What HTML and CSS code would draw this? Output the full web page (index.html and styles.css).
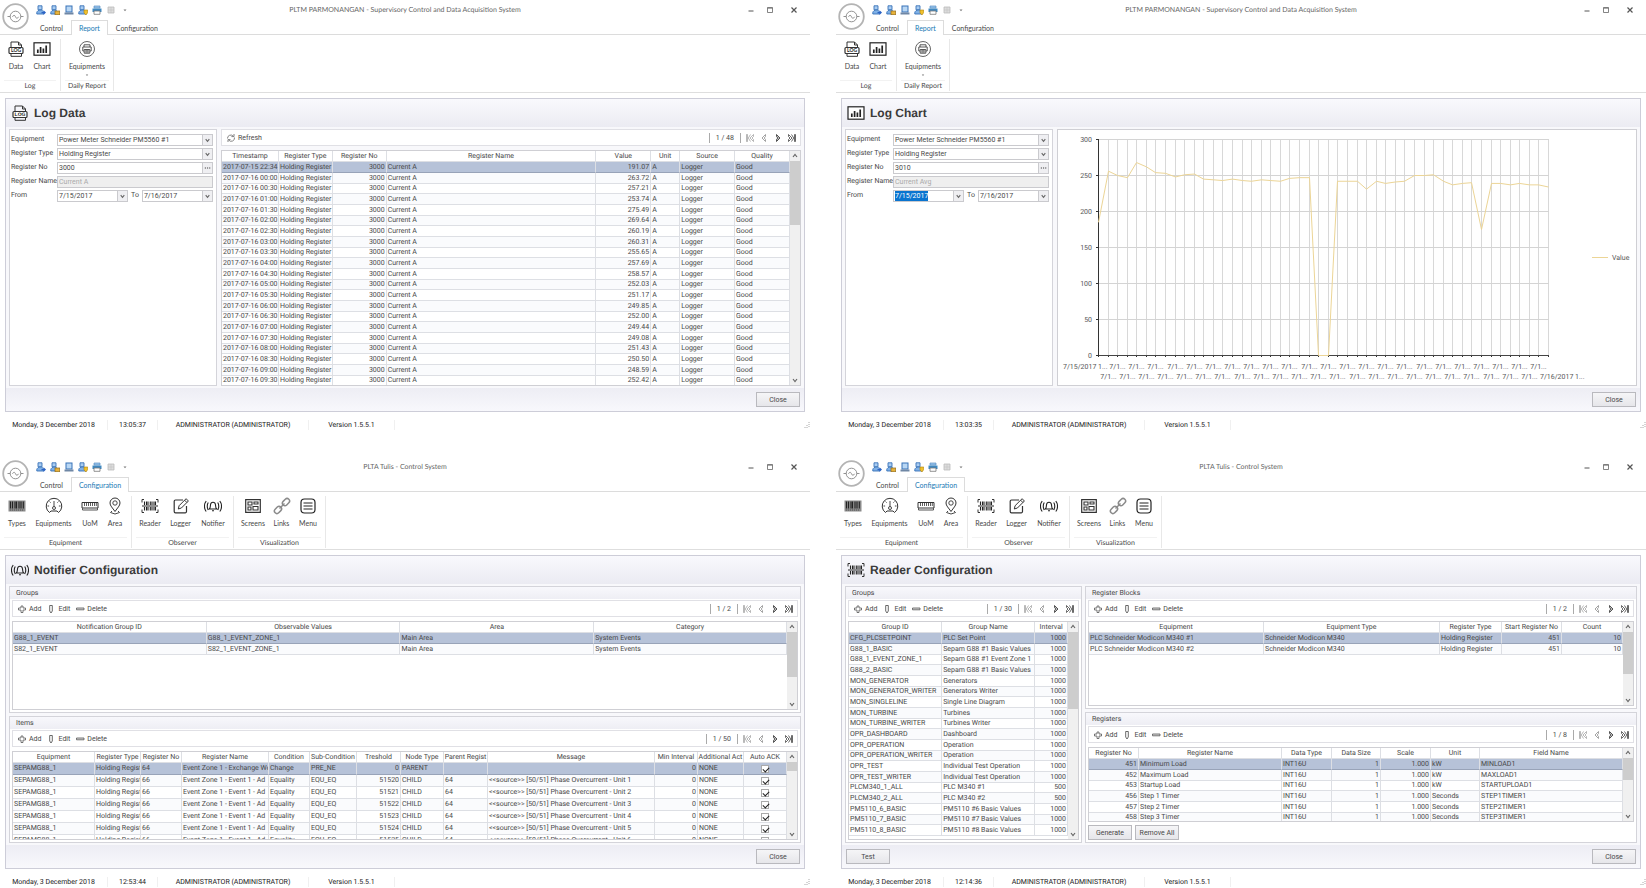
FILE: index.html
```html
<!DOCTYPE html>
<html lang="en">
<head>
<meta charset="utf-8">
<title>Supervisory Control and Data Acquisition System</title>
<link rel="stylesheet" href="styles.css">
</head>
<body>
<svg class="sprite" aria-hidden="true">
  <symbol id="i-logo" viewBox="0 0 27 27">
    <circle cx="13.500" cy="13.500" r="12.300" fill="#fff" stroke="#b4b4b4" stroke-width="1.800"/>
    <circle cx="13.500" cy="13.500" r="5.300" fill="none" stroke="#777" stroke-width=".8"/>
    <path d="M5.500 13.500h2.700M18.800 13.500h2.700M10.500 13.800c1-2 2.200-2 3 0s2 2 3 0" fill="none" stroke="#777" stroke-width=".8"/>
  </symbol>
  <symbol id="i-log" viewBox="0 0 18 18">
    <path d="M4 8V2h7.500L14.500 5v3M11.500 2v3h3M4 13v3.300h10.500V13" fill="none" stroke="#333" stroke-width="1"/>
    <rect x="2" y="7.500" width="14" height="6" rx="1" fill="#fff" stroke="#333" stroke-width="1.200"/>
    <text x="9" y="12.300" font-size="5" font-weight="700" text-anchor="middle" fill="#222">LOG</text>
  </symbol>
  <symbol id="i-chart" viewBox="0 0 18 18">
    <rect x="1" y="2.800" width="16" height="12.400" fill="#fff" stroke="#222" stroke-width="1.200"/>
    <path d="M4.800 13V9.500M7.600 13V7M10.400 13V8.500M13.200 13V5.500" stroke="#222" stroke-width="1.700"/>
  </symbol>
  <symbol id="i-printer" viewBox="0 0 18 18">
    <circle cx="9" cy="9" r="7.500" fill="none" stroke="#555" stroke-width=".9"/>
    <path d="M6 7V4.800h6V7M6 11H4.800V7h8.400v4H12M6.200 9.500h5.600v3.700H6.200zM7.200 10.800h3.600M7.200 12h3.600" fill="none" stroke="#444" stroke-width=".9"/>
  </symbol>
  <symbol id="i-barcode" viewBox="0 0 18 18">
    <rect x=".5" y="3.500" width="17" height="11" fill="#8a8a8a"/>
    <path d="M2.500 4.500v7M4.500 4.500v7M7 4.500v7M8.500 4.500v7M11 4.500v7M13 4.500v7M15.300 4.500v7" stroke="#222" stroke-width="1.100"/>
    <path d="M2 13h14" stroke="#555" stroke-width="1" stroke-dasharray="1 1"/>
  </symbol>
  <symbol id="i-gauge" viewBox="0 0 18 18">
    <path d="M4.500 15.500A7.800 7.800 0 1 1 13.500 15.500M4.500 15.500l1.500-1.500h6l1.500 1.500" fill="none" stroke="#333" stroke-width="1"/>
    <path d="M9 4v5.500M2.500 9h1.600M13.900 9h1.600M4.600 4.600l1 1M13.400 4.600l-1 1" stroke="#333" stroke-width=".9"/>
    <circle cx="9" cy="11" r="1.500" fill="none" stroke="#333" stroke-width=".9"/>
  </symbol>
  <symbol id="i-ruler" viewBox="0 0 18 18">
    <path d="M1 5.500h16v5.500H1z" fill="none" stroke="#333" stroke-width="1"/>
    <path d="M3.500 6v3M5.500 6v3M7.500 6v3M9.500 6v3M11.500 6v3M13.500 6v3M15.300 6v3" stroke="#333" stroke-width=".8"/>
    <path d="M1.500 11v2h15v-2" fill="none" stroke="#555" stroke-width="1"/>
  </symbol>
  <symbol id="i-pin" viewBox="0 0 18 18">
    <path d="M9 14.500C6.500 10.800 4 8.700 4 6a5 5 0 0 1 10 0c0 2.700-2.500 4.800-5 8.500z" fill="none" stroke="#333" stroke-width="1"/>
    <circle cx="9" cy="6" r="2.200" fill="none" stroke="#333" stroke-width=".9"/>
    <path d="M6 14l-1.500 1.500L9 17l4.500-1.500L12 14" fill="none" stroke="#333" stroke-width=".9"/>
  </symbol>
  <symbol id="i-reader" viewBox="0 0 18 18">
    <path d="M3 2.500H1v3M15 2.500h2v3M3 15.500H1v-3M15 15.500h2v-3" fill="none" stroke="#333" stroke-width="1"/>
    <path d="M3.500 4.500V8M5.500 4.500V8M7 4.500V8M9.300 4.500V8M11 4.500V8M13 4.500V8M14.500 4.500V8M3.500 10v3.500M5.500 10v3.500M7 10v3.500M9.300 10v3.500M11 10v3.500M13 10v3.500M14.500 10v3.500" stroke="#222" stroke-width="1.100"/>
    <path d="M1 9h16" stroke="#222" stroke-width="1"/>
  </symbol>
  <symbol id="i-logger" viewBox="0 0 18 18">
    <path d="M11 3H3.500a1.300 1.300 0 0 0-1.300 1.300v10.200a1.300 1.300 0 0 0 1.300 1.300h9.700a1.300 1.300 0 0 0 1.300-1.300V9" fill="none" stroke="#333" stroke-width="1.200"/>
    <path d="M6.300 12l.8-3.300 7-7 2.300 2.300-7 7zM12.600 3.200l2.300 2.300" fill="none" stroke="#333" stroke-width="1"/>
  </symbol>
  <symbol id="i-notifier" viewBox="0 0 18 18">
    <path d="M5.300 12h7.400c-1.300-1.200-1-2.700-1.200-4.300C11.300 6 10.300 5.200 9 5.200S6.700 6 6.500 7.700C6.300 9.300 6.600 10.800 5.300 12zM8 13.700h2" fill="none" stroke="#222" stroke-width="1.100"/>
    <path d="M4.300 5.500c-1.400 2-1.400 5.500 0 7.500M2.200 4C-.1 7-.1 11.500 2.200 14.500M13.700 5.500c1.400 2 1.400 5.500 0 7.500M15.800 4c2.300 3 2.300 7.500 0 10.500" fill="none" stroke="#222" stroke-width="1.100"/>
  </symbol>
  <symbol id="i-screens" viewBox="0 0 18 18">
    <path d="M1.700 2.700h14.600v12.600H1.700z" fill="none" stroke="#333" stroke-width="1.200"/>
    <path d="M4 5h4v3H4zM10 5h4v2h-4zM4 10h3v3H4zM9 9.500h5V13H9z" fill="none" stroke="#333" stroke-width="1.100"/>
  </symbol>
  <symbol id="i-links" viewBox="0 0 18 18">
    <g fill="none" stroke="#8a8a8a" stroke-width="1.500">
      <rect x="9" y="2.600" width="8" height="5" rx="2.500" transform="rotate(-45 13 5.100)"/>
      <rect x="1" y="10.400" width="8" height="5" rx="2.500" transform="rotate(-45 5 12.900)"/>
      <path d="M6.500 11.500l5-5"/>
    </g>
  </symbol>
  <symbol id="i-menu" viewBox="0 0 18 18">
    <rect x="2" y="2" width="14" height="14" rx="3.500" fill="none" stroke="#222" stroke-width="1.200"/>
    <path d="M4.500 6h9M4.500 9h9M4.500 12h9" stroke="#222" stroke-width="1.200"/>
  </symbol>
  <symbol id="i-user" viewBox="0 0 10 10">
    <path d="M2 .8h4v4H2z" fill="#a9cdf2" stroke="#3873b8" stroke-width=".9"/>
    <path d="M.8 9V7.500C1.200 6 2.500 5 4.200 5S7.500 6 7.800 7.500V9z" fill="#7fb0e6" stroke="#3873b8" stroke-width=".9"/>
  </symbol>
  <symbol id="i-user-go" viewBox="0 0 10 10"><use href="#i-user"/><path d="M5.500 7h2V5.200L10 7.600 7.500 10V8.300h-2z" fill="#2b62c4"/></symbol>
  <symbol id="i-user-lock" viewBox="0 0 10 10"><use href="#i-user"/><rect x="5" y="6" width="4.800" height="3.800" fill="#e8b23a" stroke="#8f6a1d" stroke-width=".7"/></symbol>
  <symbol id="i-user-card" viewBox="0 0 10 10"><rect x="2" y="1" width="6" height="6" fill="#b9d7f4" stroke="#3873b8"/><path d="M.5 7.500h9v2h-9z" fill="#6f87a5"/></symbol>
  <symbol id="i-user-key" viewBox="0 0 10 10"><use href="#i-user"/><path d="M6 5h3.800v2.500L8 10 6 8z" fill="#f0c02c" stroke="#a77f16" stroke-width=".6"/></symbol>
  <symbol id="i-print" viewBox="0 0 10 10"><path d="M2 1h6v2H2z" fill="#9cc8f0" stroke="#5a8cc0" stroke-width=".7"/><path d="M.5 3.500h9v3.500h-9z" fill="#3f88c0"/><path d="M2 6h6v3.300H2z" fill="#fff" stroke="#777" stroke-width=".8"/></symbol>
  <symbol id="i-grey" viewBox="0 0 10 10"><path d="M2 2h6v6H2z" fill="#ddd" stroke="#bbb" stroke-width=".8"/><path d="M2 5h6M5 2v6" stroke="#c4c4c4" stroke-width=".6"/></symbol>
  <symbol id="i-refresh" viewBox="0 0 10 10"><path d="M1.500 5.500a3.300 3.300 0 0 1 5.800-2.300M8.500 4.500a3.300 3.300 0 0 1-5.800 2.600M8 1v2.600H5.400M2 9V6.600h2.500" fill="none" stroke="#777" stroke-width=".9"/></symbol>
  <symbol id="i-add" viewBox="0 0 10 10"><path d="M4 2h2v2h2.500v2H6v2.500H4V6H1.500V4H4z" fill="#fff" stroke="#555" stroke-width=".8"/></symbol>
  <symbol id="i-edit" viewBox="0 0 10 10"><path d="M3.700 1.500h2.600V7L5 9 3.700 7z" fill="#fff" stroke="#444" stroke-width=".8"/></symbol>
  <symbol id="i-delete" viewBox="0 0 10 10"><path d="M1.500 4h7.500v1.800H1.500z" fill="#ddd" stroke="#555" stroke-width=".8"/></symbol>
  <symbol id="i-first" viewBox="0 0 10 10"><path d="M1.500 1.500h1v7h-1zM8.500 1.500L5 5l3.500 3.500V6.500L7 5l1.500-1.500zM5.500 1.500L3.300 5l2.200 3.500" fill="none" stroke="#999" stroke-width=".7"/></symbol>
  <symbol id="i-prev" viewBox="0 0 10 10"><path d="M6.500 1.500L3 5l3.500 3.500V6.500L5.200 5l1.300-1.500z" fill="none" stroke="#999" stroke-width=".9"/></symbol>
  <symbol id="i-next" viewBox="0 0 10 10"><path d="M3.500 1.500L7 5 3.500 8.500V6.500L4.800 5 3.500 3.500z" fill="#bbb" stroke="#444" stroke-width=".9"/></symbol>
  <symbol id="i-last" viewBox="0 0 10 10"><path d="M7.500 1.500h1v7h-1zM1.500 1.500L5 5 1.500 8.500V6.500L3 5 1.500 3.500zM4.500 1.500L6.700 5 4.500 8.500" fill="none" stroke="#444" stroke-width=".8"/></symbol>
  <symbol id="i-down" viewBox="0 0 10 10"><path d="M3 4l2 2.500L7 4" fill="none" stroke="#666" stroke-width="1.200"/></symbol>
  <symbol id="i-up" viewBox="0 0 10 10"><path d="M3 6l2-2.500L7 6" fill="none" stroke="#666" stroke-width="1.200"/></symbol>
  <symbol id="i-dots" viewBox="0 0 10 10"><path d="M2 5h1.300M4.400 5h1.300M6.800 5h1.300" stroke="#444" stroke-width="1.200"/></symbol>
  <symbol id="i-tri" viewBox="0 0 10 10"><path d="M3.500 4.500h3L5 6.300z" fill="#777"/></symbol>
  <symbol id="i-min" viewBox="0 0 10 10"><path d="M2.500 6h5" stroke="#555" stroke-width="1"/></symbol>
  <symbol id="i-max" viewBox="0 0 10 10"><path d="M2.500 2.500h5v5h-5zM2.500 3.200h5" fill="none" stroke="#666" stroke-width=".8"/></symbol>
  <symbol id="i-close" viewBox="0 0 10 10"><path d="M2.500 2.500l5 5M7.500 2.500l-5 5" stroke="#555" stroke-width="1.200"/></symbol>
  <symbol id="i-grip" viewBox="0 0 6 6"><path d="M5 0v6M3 3v3M1 5v1" stroke="#aaa" stroke-width="1" stroke-dasharray="1 1"/></symbol>
</svg>

<main class="desktop">
  <section class="window" data-title="PLTM PARMONANGAN - Supervisory Control and Data Acquisition System" data-ribbon="report" data-time="13:05:37">
    <div class="panel">
      <h1 class="panel-title"><svg><use href="#i-log"/></svg>Log Data</h1>
      <div class="panel-body split-form">
        <form class="box form" data-no="3000" data-name="Current A"></form>
        <div class="stack">
          <div class="toolbar" data-kind="refresh" data-page="1 / 48"></div>
          <div class="grid" data-table="log"></div>
        </div>
      </div>
      <footer class="panel-foot"><button class="btn push">Close</button></footer>
    </div>
  </section>

  <section class="window" data-title="PLTM PARMONANGAN - Supervisory Control and Data Acquisition System" data-ribbon="report" data-time="13:03:35">
    <div class="panel">
      <h1 class="panel-title"><svg><use href="#i-chart"/></svg>Log Chart</h1>
      <div class="panel-body split-form">
        <form class="box form" data-no="3010" data-name="Current Avg" data-picked="1"></form>
        <div class="chart"></div>
      </div>
      <footer class="panel-foot"><button class="btn push">Close</button></footer>
    </div>
  </section>

  <section class="window" data-title="PLTA Tulis - Control System" data-ribbon="config" data-time="12:53:44">
    <div class="panel">
      <h1 class="panel-title"><svg><use href="#i-notifier"/></svg>Notifier Configuration</h1>
      <div class="panel-body rows-even">
        <section class="group">
          <h2>Groups</h2>
          <div class="toolbar" data-kind="edit" data-page="1 / 2"></div>
          <div class="grid" data-table="notifierGroups"></div>
        </section>
        <section class="group">
          <h2>Items</h2>
          <div class="toolbar" data-kind="edit" data-page="1 / 50"></div>
          <div class="grid tall" data-table="items"></div>
        </section>
      </div>
      <footer class="panel-foot"><button class="btn push">Close</button></footer>
    </div>
  </section>

  <section class="window" data-title="PLTA Tulis - Control System" data-ribbon="config" data-time="12:14:36">
    <div class="panel">
      <h1 class="panel-title"><svg><use href="#i-reader"/></svg>Reader Configuration</h1>
      <div class="panel-body split-reader">
        <section class="group">
          <h2>Groups</h2>
          <div class="toolbar" data-kind="edit" data-page="1 / 30"></div>
          <div class="grid" data-table="readerGroups"></div>
        </section>
        <div class="rows-reader">
          <section class="group">
            <h2>Register Blocks</h2>
            <div class="toolbar" data-kind="edit" data-page="1 / 2"></div>
            <div class="grid" data-table="blocks"></div>
          </section>
          <section class="group">
            <h2>Registers</h2>
            <div class="toolbar" data-kind="edit" data-page="1 / 8"></div>
            <div class="grid" data-table="registers"></div>
            <div class="actions"><button class="btn">Generate</button><button class="btn">Remove All</button></div>
          </section>
        </div>
      </div>
      <footer class="panel-foot"><button class="btn">Test</button><button class="btn push">Close</button></footer>
    </div>
  </section>
</main>
<script src="script.js"></script>
</body>
</html>
```

FILE: styles.css
```css
:root {
  --ui: "Lato", "Open Sans", sans-serif;
  --data: "Roboto", "Liberation Sans", sans-serif;
  --line: #d4d4da;
}
* { box-sizing: border-box; }
body {
  margin: 0;
  background: #fff;
  color: #484848;
  font: 7px/10px var(--data);
  text-rendering: geometricPrecision;
}
button, input, select { font: inherit; color: inherit; margin: 0; }
button { padding: 0; border: 0; background: none; }
svg { display: block; }
.sprite { position: absolute; width: 0; height: 0; }
.ico { width: 10px; height: 10px; flex: none; }

.desktop {
  display: grid;
  grid-template: minmax(0, 1fr) minmax(0, 1fr) / minmax(0, 1fr) minmax(0, 1fr);
  gap: 26px;
  height: 100vh;
}
.window { position: relative; display: flex; flex-direction: column; min-height: 0; }

/* title bar and tabs */
.logo { position: absolute; left: 2px; top: 3px; width: 27px; height: 27px; }
.titlebar {
  display: grid;
  grid-template-columns: 1fr auto 1fr;
  align-items: center;
  height: 20px;
  font: 7px/10px var(--ui);
  color: #666;
}
.quick { display: flex; gap: 4px; margin-left: 36px; }
.wincontrols { display: flex; justify-content: flex-end; gap: 9px; margin-right: 11px; }
.wincontrols button:last-child { margin-left: 5px; }
.tabs {
  display: flex;
  height: 15px;
  padding-left: 32px;
  border-bottom: 1px solid #dcdcdc;
  font: 7px/14px var(--ui);
}
.tab { padding: 0 7px; height: 15px; border: 1px solid transparent; border-bottom: 0; line-height: 13px; }
.tab.on { color: #1979b5; border-color: #dcdcdc; background: #fff; }

/* ribbon */
.ribbon { display: flex; height: 58px; padding: 4px 0 1px; border-bottom: 1px solid #dedede; font: 7px/10px var(--ui); }
.rgroup { display: flex; flex-direction: column; padding: 0 4px; border-right: 1px solid #e8e8e8; }
.rbuttons { display: grid; flex: none; height: 42px; border-bottom: 1px solid #f2f2f2; }
.log .rbuttons { grid-template-columns: 24px 28px; }
.daily .rbuttons { grid-template-columns: 44px; }
.equipment .rbuttons { grid-template-columns: 26px 47px 26px 24px; }
.observer .rbuttons { grid-template-columns: 28px 33px 32px; }
.visualization .rbuttons { grid-template-columns: 30px 27px 26px; }
.rbtn { display: flex; flex-direction: column; align-items: center; justify-content: flex-start; padding-top: 1px; white-space: nowrap; }
.rbtn svg { width: 18px; height: 18px; margin-bottom: 3px; }
.rbtn .ico { width: 10px; height: 8px; margin: 0; }
.rgroup > span { text-align: center; }

/* panel */
.panel {
  flex: 1;
  min-height: 0;
  display: flex;
  flex-direction: column;
  margin: 5px 5px 0;
  border: 1px solid #cdcdd8;
  background: #f8f8fb;
}
.panel-title {
  display: flex;
  align-items: center;
  gap: 5px;
  height: 28px;
  margin: 0;
  padding: 0 5px;
  background: linear-gradient(#f9f9fd, #ebebf2);
  font: bold 12px/16px "Liberation Sans", Arial, sans-serif;
  color: #3a3a3a;
}
.panel-title svg { width: 18px; height: 18px; }
.panel-body { flex: 1; min-height: 0; display: grid; padding: 2px 3px; }
.panel-foot {
  display: flex;
  align-items: center;
  height: 23px;
  padding: 0 4px;
  background: linear-gradient(#ededf4, #f8f8fc);
}
.split-form { grid-template: minmax(0, 1fr) / 208px minmax(0, 1fr); gap: 4px; }
.split-reader { grid-template: minmax(0, 1fr) / 237px minmax(0, 1fr); gap: 3px; }
.rows-even { grid-template-rows: minmax(0, 1fr) minmax(0, 1fr); gap: 3px; }
.rows-reader { display: grid; grid-template-rows: minmax(0, 31fr) minmax(0, 33fr); gap: 3px; min-height: 0; }
.stack { display: flex; flex-direction: column; min-height: 0; }
.box { border: 1px solid var(--line); background: #fff; }
.btn { width: 44px; height: 15px; border: 1px solid #b9b9be; background: linear-gradient(#f5f5f7, #e6e6ea); line-height: 12px; }
.push { margin-left: auto; }

.group { display: flex; flex-direction: column; min-height: 0; padding: 0 2px 2px; border: 1px solid var(--line); background: #fff; }
.group h2 { margin: 0 -2px 1px; padding: 0 6px; background: linear-gradient(#f8f8fc, #eeeef4); font: inherit; line-height: 12px; }
.actions { display: flex; gap: 3px; margin-top: 3px; }

/* toolbar */
.toolbar { display: flex; align-items: center; height: 17px; margin-bottom: 4px; padding: 0 3px 0 4px; border: 1px solid #e0e0e5; background: #fff; }
.tool { display: flex; align-items: center; gap: 2px; padding-right: 5px; }
.pager { display: flex; align-items: center; gap: 4px; margin-left: auto; }
.pager span { padding: 0 6px; border: solid #aaa; border-width: 0 1px; }

/* data grids */
.grid { flex: 1; min-height: 0; display: flex; border: 1px solid #cfcfd4; background: #fff; overflow: hidden; }
.sheet { flex: 1; min-width: 0; overflow: hidden; }
table { width: 100%; table-layout: fixed; border-collapse: separate; border-spacing: 0; }
th, td {
  height: 11px;
  padding: 0 1px;
  border: solid #dddfe4;
  border-width: 0 1px 1px 0;
  overflow: hidden;
  white-space: nowrap;
  font-weight: normal;
  line-height: 9px;
}
th { padding: 0; text-align: center; }
td { text-align: left; }
.num { text-align: right; }
.mid { text-align: center; }
tbody tr:nth-child(3n) td { height: 10px; }
tbody tr:nth-child(even) td { background: #fafbfd; }
tbody tr:first-child td { background: #b6c2d8; border-bottom-color: #98a3b8; }
.tall tbody tr td { height: 12px; }
td input[type="checkbox"] {
  appearance: none;
  display: block;
  width: 8px;
  height: 8px;
  margin: 0 auto;
  border: 1px solid #aaa;
  background: #fff;
}
td input[type="checkbox"]::before {
  content: "";
  display: block;
  width: 5px;
  height: 3px;
  margin: 1px 0 0 1px;
  border: solid #222;
  border-width: 0 0 1px 1px;
  transform: rotate(-45deg);
}
.scroll { display: flex; flex-direction: column; width: 10px; background: #f0f0f0; }
.scroll .track { flex: 1; min-height: 0; }
.thumb { background: #cdcdcd; }

/* filter form */
.form { display: grid; grid-template-columns: 46px minmax(0, 1fr); grid-auto-rows: 11px; gap: 3px 0; align-content: start; padding: 4px 3px 4px 1px; }
.form label { line-height: 10px; white-space: nowrap; }
.field { display: flex; height: 12px; min-width: 0; border: 1px solid #cacace; background: #fff; }
.field input, .field select { flex: 1; min-width: 0; width: 0; border: 0; padding: 0 1px; background: none; appearance: none; outline: 0; line-height: 10px; height: 10px; }
.field .ico { height: 10px; background: #efeff2; border-left: 1px solid #cacace; }
.field.off { background: #efefef; color: #aaa; }
.dates { display: grid; grid-template-columns: 1fr auto 1fr; gap: 3px; }
.field input::selection { background: #0a74cf; color: #fff; }

/* chart */
.chart { border: 1px solid #cfcfd4; background: #fff; min-height: 0; }
.chart svg { width: 100%; height: 100%; }
.chart text { fill: #555; font: 7px var(--data); }

/* status bar */
.status { display: grid; grid-template-columns: 108px 50px 151px 86px 1fr; align-items: center; height: 19px; padding-top: 6px; color: #222; text-align: center; }
.status span { border-right: 1px solid #f0f0f0; white-space: nowrap; }
.status svg { width: 6px; height: 6px; justify-self: end; }
```

FILE: script.js
```js
const icon = (name, cls = 'ico') => `<svg class="${cls}"><use href="#i-${name}"/></svg>`;

const ribbons = {
  report: {
    tabs: ['Control', 'Report', 'Configuration'], active: 'Report',
    groups: [
      ['log', 'Log', [['log', 'Data'], ['chart', 'Chart']]],
      ['daily', 'Daily Report', [['printer', 'Equipments', true]]]
    ]
  },
  config: {
    tabs: ['Control', 'Configuration'], active: 'Configuration',
    groups: [
      ['equipment', 'Equipment', [['barcode', 'Types'], ['gauge', 'Equipments'], ['ruler', 'UoM'], ['pin', 'Area']]],
      ['observer', 'Observer', [['reader', 'Reader'], ['logger', 'Logger'], ['notifier', 'Notifier']]],
      ['visualization', 'Visualization', [['screens', 'Screens'], ['links', 'Links'], ['menu', 'Menu']]]
    ]
  }
};

document.querySelectorAll('.window').forEach(win => {
  const r = ribbons[win.dataset.ribbon];
  const quick = ['user-go', 'user-lock', 'user-card', 'user-key', 'print', 'grey', 'tri'];
  win.insertAdjacentHTML('afterbegin', `
    <svg class="logo"><use href="#i-logo"/></svg>
    <header class="titlebar">
      <div class="quick">${quick.map(q => `<button aria-label="${q}">${icon(q)}</button>`).join('')}</div>
      <span>${win.dataset.title}</span>
      <div class="wincontrols">${['min', 'max', 'close'].map(q => `<button aria-label="${q}">${icon(q)}</button>`).join('')}</div>
    </header>
    <nav class="tabs">${r.tabs.map(t => `<button class="tab${t === r.active ? ' on' : ''}">${t}</button>`).join('')}</nav>
    <div class="ribbon">${r.groups.map(([cls, name, items]) => `
      <div class="rgroup ${cls}"><div class="rbuttons">${items.map(([ic, label, more]) =>
        `<button class="rbtn">${icon(ic, '')}${label}${more ? icon('tri') : ''}</button>`).join('')}</div><span>${name}</span></div>`).join('')}
    </div>`);
  win.insertAdjacentHTML('beforeend', `
    <footer class="status"><span>Monday, 3 December 2018</span><span>${win.dataset.time}</span><span>ADMINISTRATOR (ADMINISTRATOR)</span><span>Version 1.5.5.1</span>${icon('grip', '')}</footer>`);
});

document.querySelectorAll('.form').forEach((form, i) => {
  const { no, name, picked } = form.dataset;
  const id = n => `f${i}-${n}`;
  form.innerHTML = `
    <label for="${id('eq')}">Equipment</label>
    <div class="field"><select id="${id('eq')}"><option>Power Meter Schneider PM5560 #1</option></select>${icon('down')}</div>
    <label for="${id('rt')}">Register Type</label>
    <div class="field"><select id="${id('rt')}"><option>Holding Register</option></select>${icon('down')}</div>
    <label for="${id('no')}">Register No</label>
    <div class="field"><input id="${id('no')}" value="${no}">${icon('dots')}</div>
    <label for="${id('rn')}">Register Name</label>
    <div class="field off"><input id="${id('rn')}" value="${name}" disabled></div>
    <label for="${id('from')}">From</label>
    <div class="dates">
      <div class="field"><input id="${id('from')}" value="7/15/2017">${icon('down')}</div>
      <label for="${id('to')}">To</label>
      <div class="field"><input id="${id('to')}" value="7/16/2017">${icon('down')}</div>
    </div>`;
  if (picked) {
    const from = form.querySelector(`#${id('from')}`);
    from.focus();
    from.select();
  }
});

document.querySelectorAll('.toolbar').forEach(bar => {
  const tools = bar.dataset.kind === 'refresh'
    ? [['refresh', 'Refresh']]
    : [['add', 'Add'], ['edit', 'Edit'], ['delete', 'Delete']];
  bar.innerHTML = tools.map(([ic, label]) => `<button class="tool">${icon(ic)}${label}</button>`).join('') +
    `<div class="pager"><span>${bar.dataset.page}</span>${['first', 'prev', 'next', 'last'].map(n => `<button aria-label="${n}">${icon(n)}</button>`).join('')}</div>`;
});

const logValues = ['191.07', '263.72', '257.21', '253.74', '275.49', '269.64', '260.19', '260.31', '255.65', '257.69', '258.57',
  '252.03', '251.17', '249.85', '252.00', '249.44', '249.08', '251.43', '250.50', '248.59', '252.42'];
const logTime = i => i === 0 ? '2017-07-15 22:34'
  : `2017-07-16 ${String(Math.floor((i - 1) / 2)).padStart(2, '0')}:${i % 2 ? '00' : '30'}`;

/* columns: [title, width share, alignment] */
const tables = {
  log: {
    thumb: 30,
    cols: [['Timestamp', 57], ['Register Type', 54], ['Register No', 54, 'num'], ['Register Name', 210], ['Value', 55, 'num'], ['Unit', 29], ['Source', 55], ['Quality', 55]],
    rows: logValues.map((v, i) => [logTime(i), 'Holding Register', '3000', 'Current A', v, 'A', 'Logger', 'Good'])
  },
  notifierGroups: {
    thumb: 67,
    cols: [['Notification Group ID', 194], ['Observable Values', 194], ['Area', 194], ['Category', 193]],
    rows: [
      ['G88_1_EVENT', 'G88_1_EVENT_ZONE_1', 'Main Area', 'System Events'],
      ['S82_1_EVENT', 'S82_1_EVENT_ZONE_1', 'Main Area', 'System Events']
    ]
  },
  items: {
    thumb: 14,
    cols: [['Equipment', 82], ['Register Type', 46], ['Register No', 41], ['Register Name', 87], ['Condition', 41], ['Sub-Condition', 47], ['Treshold', 44, 'num'],
      ['Node Type', 43], ['Parent Regist', 44], ['Message', 167], ['Min Interval', 43, 'num'], ['Additional Act', 46], ['Auto ACK', 43, 'mid']],
    rows: [
      ['SEPAMG88_1', 'Holding Regist', '64', 'Event Zone 1 - Exchange Wo', 'Change', 'PRE_NE', '0', 'PARENT', '', '', '0', 'NONE', true],
      ...[1, 2, 3, 4, 5, 6].map(n => ['SEPAMG88_1', 'Holding Regist', '66', 'Event Zone 1 - Event 1 - Ad', 'Equality', 'EQU_EQ', String(51519 + n),
        'CHILD', '64', `&lt;&lt;source&gt;&gt; [50/51] Phase Overcurrent - Unit ${n}`, '0', 'NONE', true])
    ]
  },
  readerGroups: {
    thumb: 39,
    cols: [['Group ID', 94], ['Group Name', 94], ['Interval', 33, 'num']],
    rows: [
      ['CFG_PLCSETPOINT', 'PLC Set Point', '1000'],
      ['G88_1_BASIC', 'Sepam G88 #1 Basic Values', '1000'],
      ['G88_1_EVENT_ZONE_1', 'Sepam G88 #1 Event Zone 1', '1000'],
      ['G88_2_BASIC', 'Sepam G88 #1 Basic Values', '1000'],
      ['MON_GENERATOR', 'Generators', '1000'],
      ['MON_GENERATOR_WRITER', 'Generators Writer', '1000'],
      ['MON_SINGLELINE', 'Single Line Diagram', '1000'],
      ['MON_TURBINE', 'Turbines', '1000'],
      ['MON_TURBINE_WRITER', 'Turbines Writer', '1000'],
      ['OPR_DASHBOARD', 'Dashboard', '1000'],
      ['OPR_OPERATION', 'Operation', '1000'],
      ['OPR_OPERATION_WRITER', 'Operation', '1000'],
      ['OPR_TEST', 'Individual Test Operation', '1000'],
      ['OPR_TEST_WRITER', 'Individual Test Operation', '1000'],
      ['PLCM340_1_ALL', 'PLC M340 #1', '500'],
      ['PLCM340_2_ALL', 'PLC M340 #2', '500'],
      ['PM5110_6_BASIC', 'PM5110 #6 Basic Values', '1000'],
      ['PM5110_7_BASIC', 'PM5110 #7 Basic Values', '1000'],
      ['PM5110_8_BASIC', 'PM5110 #8 Basic Values', '1000']
    ]
  },
  blocks: {
    thumb: 67,
    cols: [['Equipment', 175], ['Equipment Type', 176], ['Register Type', 62], ['Start Register No', 60, 'num'], ['Count', 61, 'num']],
    rows: [
      ['PLC Schneider Modicon M340 #1', 'Schneider Modicon M340', 'Holding Register', '451', '10'],
      ['PLC Schneider Modicon M340 #2', 'Schneider Modicon M340', 'Holding Register', '451', '10']
    ]
  },
  registers: {
    thumb: 42,
    cols: [['Register No', 50, 'num'], ['Register Name', 143], ['Data Type', 50], ['Data Size', 49, 'num'], ['Scale', 50, 'num'], ['Unit', 49], ['Field Name', 143]],
    rows: [
      ['451', 'Minimum Load', 'INT16U', '1', '1.000', 'kW', 'MINLOAD1'],
      ['452', 'Maximum Load', 'INT16U', '1', '1.000', 'kW', 'MAXLOAD1'],
      ['453', 'Startup Load', 'INT16U', '1', '1.000', 'kW', 'STARTUPLOAD1'],
      ['456', 'Step 1 Timer', 'INT16U', '1', '1.000', 'Seconds', 'STEP1TIMER1'],
      ['457', 'Step 2 Timer', 'INT16U', '1', '1.000', 'Seconds', 'STEP2TIMER1'],
      ['458', 'Step 3 Timer', 'INT16U', '1', '1.000', 'Seconds', 'STEP3TIMER1']
    ]
  }
};

document.querySelectorAll('.grid').forEach(grid => {
  const t = tables[grid.dataset.table];
  const total = t.cols.reduce((s, c) => s + c[1], 0);
  grid.innerHTML = `
    <div class="sheet"><table>
      <colgroup>${t.cols.map(c => `<col style="width:${c[1] / total * 100}%">`).join('')}</colgroup>
      <thead><tr>${t.cols.map(c => `<th scope="col">${c[0]}</th>`).join('')}</tr></thead>
      <tbody>${t.rows.map(r => `<tr>${r.map((v, i) =>
        `<td class="${t.cols[i][2] || ''}">${v === true ? '<input type="checkbox" checked aria-label="Auto ACK">' : v}</td>`).join('')}</tr>`).join('')}</tbody>
    </table></div>
    <div class="scroll">${icon('up')}<div class="track"><div class="thumb" style="height:${t.thumb}%"></div></div>${icon('down')}</div>`;
});

/* log chart: 48 half-hour samples */
const samples = [185, 256, 250, 247, 268, 262, 254, 253, 248, 251, 252, 245, 244, 243, 245, 243, 242, 244, 243, 242, 246, 247, 247, 0, 0,
  242, 242, 242, 231, 242, 239, 241, 242, 250, 250, 251, 242, 237, 239, 240, 175, 239, 239, 237, 239, 237, 237, 234];
const px = i => Math.round(40 + i * 450 / 47) + 0.5;
const py = v => 225.5 - v * 216 / 300;
let svg = '';
samples.forEach((v, i) => {
  svg += `<path d="M${px(i)} 9V225" stroke="#d8d8d8"/><path d="M${px(i)} 225v2" stroke="#333"/>`;
  const y = i % 2 ? 249 : 239;
  if (i === 0) svg += `<text x="5" y="${y}">7/15/2017 1...</text>`;
  else if (i === 47) svg += `<text x="482" y="${y}">7/16/2017 1...</text>`;
  else svg += `<text x="${px(i)}" y="${y}" text-anchor="middle">7/1...</text>`;
});
for (let v = 0; v <= 300; v += 50) {
  svg += `<path d="M40 ${py(v)}H491" stroke="${v ? '#d4d4d4' : '#444'}"/><path d="M38 ${py(v)}h2" stroke="#333"/>
    <text x="34" y="${py(v) + 2}" text-anchor="end">${v}</text>`;
}
svg += `<path d="M40.500 9V226" stroke="#333"/>
  <polyline points="${samples.map((v, i) => `${px(i)},${py(v)}`).join(' ')}" fill="none" stroke="#ecd596"/>
  <path d="M534 127.500h16" stroke="#ecd596"/><text x="554" y="130">Value</text>`;
document.querySelector('.chart').innerHTML = `<svg viewBox="0 0 578 255" role="img" aria-label="Log chart">${svg}</svg>`;
```
